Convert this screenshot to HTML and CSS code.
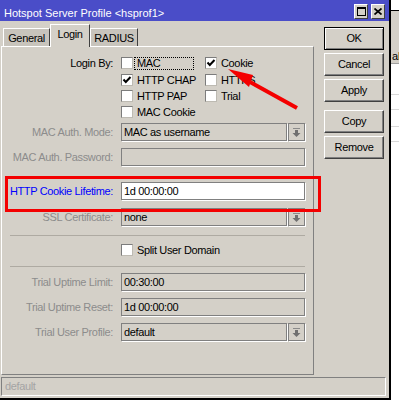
FILE: index.html
```html
<!DOCTYPE html>
<html>
<head>
<meta charset="utf-8">
<title>Hotspot Server Profile</title>
<link rel="stylesheet" href="styles.css">
</head>
<body>
<div class="screen">
  <div class="window">
    <div class="titlebar">
      <span class="title">Hotspot Server Profile &lt;hsprof1&gt;</span>
      <div class="tb-btns">
        <span class="tb-btn"><svg width="9" height="9" viewBox="0 0 9 9"><rect x="0.5" y="0.5" width="8" height="8" fill="none" stroke="#000"/><rect x="0" y="0" width="9" height="2" fill="#000"/></svg></span>
        <span class="tb-btn"><svg width="8" height="7" viewBox="0 0 8 7"><path d="M0.5 0.5 L7.5 6.5 M7.5 0.5 L0.5 6.5" stroke="#000" stroke-width="1.7"/></svg></span>
      </div>
    </div>
    <div class="main">
      <div class="tabarea">
        <div class="tabs">
          <div class="tab t-general">General</div>
          <div class="tab t-login active">Login</div>
          <div class="tab t-radius">RADIUS</div>
        </div>
        <div class="panel">
          <div class="loginby">
            <div class="lbl black lb-label">Login By:</div>
            <div class="cbgrid">
              <div class="cb"><span class="box"></span><span class="text focus">MAC</span></div>
              <div class="cb"><span class="box"><svg width="10" height="10" viewBox="0 0 10 10"><path d="M1.5 4.5 L3.8 7 L8.5 2" fill="none" stroke="#000" stroke-width="2"/></svg></span><span class="text">Cookie</span></div>
              <div class="cb"><span class="box"><svg width="10" height="10" viewBox="0 0 10 10"><path d="M1.5 4.5 L3.8 7 L8.5 2" fill="none" stroke="#000" stroke-width="2"/></svg></span><span class="text">HTTP CHAP</span></div>
              <div class="cb"><span class="box"></span><span class="text">HTTPS</span></div>
              <div class="cb"><span class="box"></span><span class="text">HTTP PAP</span></div>
              <div class="cb"><span class="box"></span><span class="text">Trial</span></div>
              <div class="cb"><span class="box"></span><span class="text">MAC Cookie</span></div>
            </div>
          </div>

          <div class="row r-macmode">
            <div class="lbl">MAC Auth. Mode:</div>
            <div class="combo"><div class="field">MAC as username</div><div class="drop"><svg width="9" height="9" viewBox="0 0 9 9"><rect x="1" y="0" width="7" height="1" fill="#8a8a8a"/><path d="M3 2h3v3h2.5L4.5 9 0.5 5H3z" fill="#707070"/></svg></div></div>
          </div>
          <div class="row r-pass">
            <div class="lbl">MAC Auth. Password:</div>
            <div class="field"></div>
          </div>
          <div class="row r-cookie">
            <div class="lbl blue">HTTP Cookie Lifetime:</div>
            <div class="field white">1d 00:00:00</div>
          </div>
          <div class="row r-ssl">
            <div class="lbl">SSL Certificate:</div>
            <div class="combo"><div class="field">none</div><div class="drop"><svg width="9" height="9" viewBox="0 0 9 9"><rect x="1" y="0" width="7" height="1" fill="#8a8a8a"/><path d="M3 2h3v3h2.5L4.5 9 0.5 5H3z" fill="#707070"/></svg></div></div>
          </div>
          <div class="sep s1"></div>
          <div class="row r-split">
            <div></div>
            <div class="cb"><span class="box"></span><span class="text">Split User Domain</span></div>
          </div>
          <div class="sep s2"></div>
          <div class="row r-limit">
            <div class="lbl">Trial Uptime Limit:</div>
            <div class="field">00:30:00</div>
          </div>
          <div class="row r-reset">
            <div class="lbl">Trial Uptime Reset:</div>
            <div class="field">1d 00:00:00</div>
          </div>
          <div class="row r-profile">
            <div class="lbl">Trial User Profile:</div>
            <div class="combo"><div class="field">default</div><div class="drop"><svg width="9" height="9" viewBox="0 0 9 9"><rect x="1" y="0" width="7" height="1" fill="#8a8a8a"/><path d="M3 2h3v3h2.5L4.5 9 0.5 5H3z" fill="#707070"/></svg></div></div>
          </div>
        </div>
      </div>
      <div class="buttons">
        <button class="btn default">OK</button>
        <button class="btn">Cancel</button>
        <button class="btn">Apply</button>
        <button class="btn spaced">Copy</button>
        <button class="btn">Remove</button>
      </div>
    </div>
    <div class="statusbar">default</div>
  </div>
  <div class="backdrop">
    <div class="bd-white"></div>
    <div class="bd-gray"><span>all</span></div>
    <div class="bd-row h1"></div>
    <div class="bd-row h2"></div>
    <div class="bd-row h3"></div>
    <div class="bd-row h4"></div>
  </div>
</div>

<div class="annot-rect"></div>
<svg class="annot-arrow" width="399" height="406" viewBox="0 0 399 406">
  <line x1="297" y1="108" x2="250" y2="82" stroke="#f40000" stroke-width="4"/>
  <polygon points="228,69 253,75 249,87" fill="#f40000"/>
</svg>
</body>
</html>
```

FILE: styles.css
```css
* { box-sizing: border-box; }
html, body { margin: 0; padding: 0; }
body {
  width: 399px;
  height: 406px;
  overflow: hidden;
  background: #fff;
  font-family: "Liberation Sans", Arial, sans-serif;
  font-size: 11px;
  color: #000;
  position: relative;
}
.screen { display: flex; align-items: flex-start; }

.window {
  width: 391px;
  height: 400px;
  flex: none;
  background: #d4d0c8;
  border-right: 2px solid #000;
  border-bottom: 2px solid #000;
  display: flex;
  flex-direction: column;
}

/* title bar */
.titlebar {
  height: 21px;
  flex: none;
  background: #4a4dc8;
  display: flex;
  align-items: flex-start;
  padding: 0 4px;
}
.title {
  flex: 1;
  color: #fff;
  padding-top: 7px;
  line-height: 13px;
  white-space: nowrap;
}
.tb-btns { display: flex; gap: 3px; padding-top: 4px; }
.tb-btn {
  width: 14px;
  height: 15px;
  background: #d4d0c8;
  border: 1px solid;
  border-color: #fff #404040 #404040 #fff;
  display: flex;
  align-items: center;
  justify-content: center;
}
.tb-btn svg { display: block; }

/* main */
.main { height: 356px; flex: none; display: flex; padding-left: 1px; letter-spacing: -0.35px; }
.tabarea { width: 313px; flex: none; display: flex; flex-direction: column; padding-top: 3px; }
.tabs {
  height: 22px;
  display: flex;
  align-items: flex-end;
  padding-left: 2px;
  position: relative;
  z-index: 1;
}
.tab {
  height: 18px;
  border: 1px solid;
  border-bottom: none;
  border-color: #fff #404040 transparent #fff;
  background: #c8c4bc;
  text-align: center;
  line-height: 18px;
  white-space: nowrap;
}
.t-general { width: 47px; }
.t-login { width: 40px; }
.t-radius { width: 48px; }
.tab.active {
  height: 23px;
  margin-bottom: -1px;
  background: #d4d0c8;
  line-height: 18px;
}

.panel {
  height: 329px;
  border: 1px solid;
  border-color: #fff #808080 #808080 #fff;
  padding-top: 10px;
  display: flex;
  flex-direction: column;
}

.lbl { text-align: right; color: #8c8c8c; white-space: nowrap; }
.lbl.black { color: #000; }
.lbl.blue { color: #0000ff; }

.loginby {
  display: grid;
  grid-template-columns: 111px auto;
  column-gap: 8px;
}
.lb-label { line-height: 13px; }
.cbgrid {
  display: grid;
  grid-template-columns: 73px auto;
  column-gap: 11px;
  grid-template-rows: 17px 16px 16px 16px;
  align-items: start;
}
.cb { display: flex; align-items: flex-start; height: 13px; }
.box {
  width: 12px;
  height: 12px;
  flex: none;
  background: #fff;
  border: 1px solid;
  border-color: #7c7c7c #bdbab2 #bdbab2 #7c7c7c;
  margin-right: 1px;
}
.box svg { display: block; }
.cb .text {
  flex: 1;
  height: 13px;
  line-height: 11px;
  padding: 0 2px;
  border: 1px dotted transparent;
  white-space: nowrap;
}
.cb .text.focus { border-color: #000; }

.row {
  display: grid;
  grid-template-columns: 111px 184px;
  column-gap: 8px;
  align-items: center;
  height: 18px;
  flex: none;
}
.field {
  height: 18px;
  border: 1px solid #808080;
  box-shadow: 1px 1px 0 #fff;
  padding-left: 2px;
  line-height: 16px;
  white-space: nowrap;
  overflow: hidden;
  background: #d4d0c8;
}
.field.white { background: #fff; }
.combo { display: flex; }
.combo .field { width: 166px; flex: none; }
.drop {
  width: 17px;
  height: 18px;
  flex: none;
  margin-left: 1px;
  border: 1px solid #808080;
  box-shadow: 1px 1px 0 #fff;
  display: flex;
  align-items: center;
  justify-content: center;
}
.drop svg { display: block; }

.r-macmode { margin-top: 1px; }
.r-pass { margin-top: 7px; }
.r-cookie { margin-top: 16px; }
.r-ssl { margin-top: 8px; }
.sep { height: 1px; flex: none; background: #aeaaa2; margin-left: 8px; width: 295px; }
.s1 { margin-top: 9px; }
.r-split { margin-top: 8px; height: 13px; align-items: start; }
.s2 { margin-top: 9px; }
.r-limit { margin-top: 6px; }
.r-reset { margin-top: 7px; }
.r-profile { margin-top: 7px; }

/* buttons */
.buttons {
  width: 60px;
  flex: none;
  margin-left: 10px;
  padding-top: 6px;
  display: flex;
  flex-direction: column;
}
.btn {
  height: 23px;
  margin: 0 0 3px 0;
  padding: 0;
  font: inherit;
  letter-spacing: inherit;
  color: #000;
  background: #d4d0c8;
  border: 1px solid;
  border-color: #fff #404040 #404040 #fff;
  box-shadow: inset -1px -1px 0 #808080;
  text-align: center;
  line-height: 21px;
}
.btn.default {
  border-color: #000;
  box-shadow: inset 1px 1px 0 #fff, inset -1px -1px 0 #808080;
}
.btn.spaced { margin-top: 5px; }

.statusbar {
  margin-left: 1px;
  width: 385px;
  height: 19px;
  flex: none;
  border: 1px solid;
  border-color: #808080 #fff #fff #808080;
  color: #a4a4a4;
  padding-left: 3px;
  line-height: 17px;
  letter-spacing: -0.35px;
}

/* background application strip */
.backdrop { width: 8px; flex: none; overflow: hidden; }
.bd-white { height: 10px; background: #fff; }
.bd-gray {
  height: 54px;
  background: #d4d0c8;
  border-top: 1px solid #000;
  border-bottom: 1px solid #a0a0a0;
  padding-top: 39px;
  line-height: 12px;
  white-space: nowrap;
}
.bd-gray span { margin-left: 1px; }
.bd-row { border-bottom: 1px solid #d8d8d8; }
.bd-row.h1 { height: 31px; }
.bd-row.h2 { height: 15px; }
.bd-row.h3 { height: 17px; }
.bd-row.h4 { height: 15px; }

/* annotation overlays */
.annot-rect {
  position: absolute;
  left: 5px;
  top: 176px;
  width: 316px;
  height: 36px;
  border: 3px solid #f40000;
}
.annot-arrow {
  position: absolute;
  left: 0;
  top: 0;
  pointer-events: none;
}
```
